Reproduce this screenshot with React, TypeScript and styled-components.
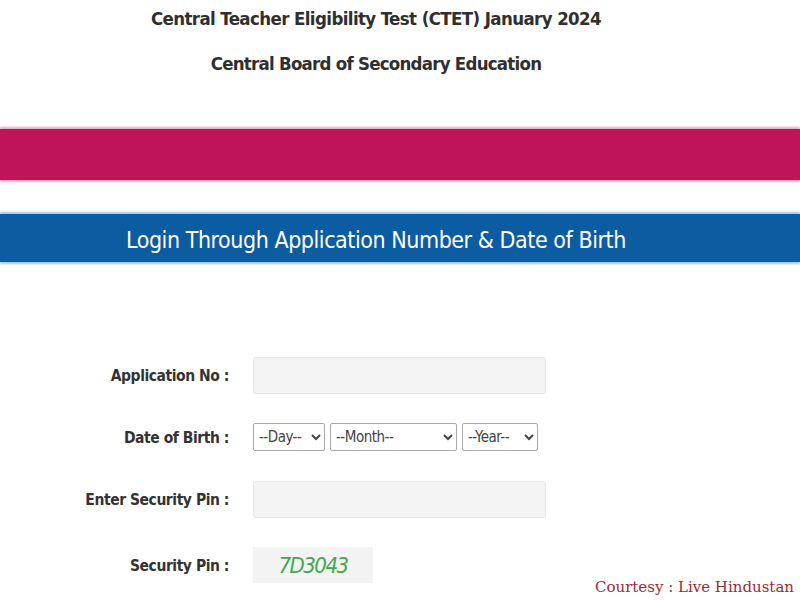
import styled, { createGlobalStyle } from 'styled-components';

const narrow = "'DejaVu Sans Condensed', 'DejaVu Sans', sans-serif";

const GlobalStyle = createGlobalStyle`
  html, body {
    margin: 0;
    padding: 0;
    background: #ffffff;
  }
  body {
    font-family: ${narrow};
    color: #333333;
  }
`;

const Page = styled.div`
  position: relative;
  width: 800px;
  height: 600px;
  overflow: hidden;
`;

const Header = styled.header`
  display: flex;
  flex-direction: column;
  align-items: center;
  padding-top: 6px;
  padding-right: 48px;
  gap: 19px;
`;

const Title = styled.h1<{ $tight?: boolean }>`
  margin: 0;
  font-size: 18.5px;
  line-height: 26px;
  font-weight: bold;
  letter-spacing: ${(p) => (p.$tight ? '-0.75px' : '-0.6px')};
  color: #2f2f2f;
`;

const Band = styled.div<{ $color: string; $edge: string }>`
  background: ${(p) => p.$color};
  box-shadow: 0 -2px 2px ${(p) => p.$edge}, 0 2px 2px ${(p) => p.$edge};
`;

const MagentaBand = styled(Band)`
  margin-top: 52px;
  height: 51px;
`;

const BlueBand = styled(Band)`
  margin-top: 34px;
  height: 48px;
  display: flex;
  align-items: center;
  justify-content: center;
  padding-right: 48px;
`;

const BandTitle = styled.h2`
  margin: 0;
  color: #ffffff;
  font-size: 23px;
  font-weight: normal;
  letter-spacing: -0.45px;
  padding-top: 4px;
`;

const Form = styled.form`
  display: grid;
  grid-template-columns: 229px auto;
  grid-template-rows: 62px 62px 62px 70px;
  column-gap: 24px;
  align-items: center;
  margin-top: 82px;
`;

const Label = styled.label`
  justify-self: end;
  font-size: 15.5px;
  font-weight: bold;
  letter-spacing: -0.45px;
  color: #333333;
  padding-top: 2px;
`;

const TextInput = styled.input`
  box-sizing: border-box;
  width: 293px;
  height: 37px;
  border: 1px solid #e6e6e6;
  border-radius: 3px;
  background: #f4f4f4;
`;

const SelectRow = styled.div`
  display: flex;
  gap: 5px;
`;

const Select = styled.select<{ $width: number }>`
  box-sizing: border-box;
  width: ${(p) => p.$width}px;
  height: 28px;
  border: 1px solid #a9a9a9;
  border-radius: 2px;
  background: #ffffff;
  font-family: ${narrow};
  font-size: 15px;
  letter-spacing: -0.5px;
  color: #444444;
  padding: 0 1px;
`;

const Captcha = styled.div`
  box-sizing: border-box;
  width: 120px;
  height: 36px;
  background: #f3f3f3;
  display: flex;
  align-items: center;
  justify-content: center;
  font-size: 22px;
  font-style: italic;
  color: #3ea94e;
  letter-spacing: -1.5px;
`;

const Courtesy = styled.div`
  position: absolute;
  right: 6px;
  bottom: 4px;
  font-family: 'DejaVu Serif', 'Liberation Serif', serif;
  font-size: 15px;
  color: #9a2a36;
`;

export default function App() {
  return (
    <Page>
      <GlobalStyle />
      <Header>
        <Title>Central Teacher Eligibility Test (CTET) January 2024</Title>
        <Title $tight>Central Board of Secondary Education</Title>
      </Header>
      <MagentaBand $color="#bf1558" $edge="#e7a9c2" />
      <BlueBand $color="#0b5ca0" $edge="#9cc9e6">
        <BandTitle>Login Through Application Number &amp; Date of Birth</BandTitle>
      </BlueBand>
      <Form>
        <Label htmlFor="appno">Application No :</Label>
        <TextInput id="appno" />
        <Label>Date of Birth :</Label>
        <SelectRow>
          <Select $width={72} defaultValue="">
            <option value="">--Day--</option>
          </Select>
          <Select $width={127} defaultValue="">
            <option value="">--Month--</option>
          </Select>
          <Select $width={76} defaultValue="">
            <option value="">--Year--</option>
          </Select>
        </SelectRow>
        <Label htmlFor="pin">Enter Security Pin :</Label>
        <TextInput id="pin" />
        <Label>Security Pin :</Label>
        <Captcha>7D3043</Captcha>
      </Form>
      <Courtesy>Courtesy : Live Hindustan</Courtesy>
    </Page>
  );
}
